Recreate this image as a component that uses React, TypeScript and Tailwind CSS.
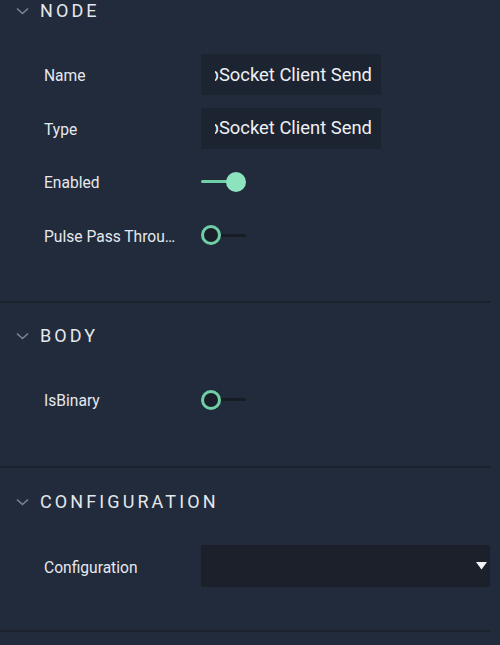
import React from "react";

const font = { fontFamily: "Roboto, 'Liberation Sans', sans-serif" };

function Chevron() {
  return (
    <svg width="13" height="8" viewBox="0 0 13 8" className="shrink-0">
      <path d="M1 1.5 L6.5 6.5 L12 1.5" fill="none" stroke="#7d8592" strokeWidth="1.6" />
    </svg>
  );
}

function Header({ title }: { title: string }) {
  return (
    <div className="flex items-center h-[20px] pl-[16px]">
      <Chevron />
      <span className="ml-[11px] text-[18px] leading-[20px] tracking-[3.1px] text-[#e4e7ec]">{title}</span>
    </div>
  );
}

function Row({ label, children }: { label: string; children: React.ReactNode }) {
  return (
    <div className="flex items-center h-[53.5px] pl-[44px]">
      <div className="w-[136px] truncate text-[15.6px] leading-[20px] pt-[3px] text-[#e6e8ee]">{label}</div>
      <div className="ml-[21px] flex items-center">{children}</div>
    </div>
  );
}

function TextBox({ value }: { value: string }) {
  return (
    <div className="w-[180px] h-[41px] bg-[#1c2331] rounded-[2px] pl-[14px] pr-[9px] flex items-center">
      <div className="overflow-hidden flex justify-end w-full">
        <span className="whitespace-nowrap text-[18.4px] text-[#eef0f4]">{value}</span>
      </div>
    </div>
  );
}

function Toggle({ on }: { on: boolean }) {
  if (on) {
    return (
      <div className="relative w-[45px] h-[20px] flex items-center">
        <div className="w-[30px] h-[3px] bg-[#6fcfa7] rounded-full" />
        <div className="absolute right-0 top-0 w-[20px] h-[20px] rounded-full bg-[#8ee3bf]" />
      </div>
    );
  }
  return (
    <div className="relative w-[45px] h-[20px] flex items-center">
      <div className="ml-[15px] w-[30px] h-[3px] bg-[#171c25] rounded-full" />
      <div className="absolute left-0 top-0 w-[20px] h-[20px] rounded-full bg-[#1a1f29] border-[3px] border-[#6fcfa7]" />
    </div>
  );
}

function Select() {
  return (
    <div className="w-[289px] h-[42px] bg-[#1b202a] rounded-[2px] flex items-center justify-end pr-[3px]">
      <svg width="11" height="8" viewBox="0 0 11 8">
        <path d="M0 0 H11 L5.5 7.5 Z" fill="#f2f2f5" />
      </svg>
    </div>
  );
}

function Section({ title, variant, children }: { title: string; variant: "first" | "mid" | "last"; children: React.ReactNode }) {
  const pad =
    variant === "first"
      ? "pt-[1px] pb-[39px]"
      : variant === "mid"
      ? "pt-[23px] pb-[39px]"
      : "pt-[24px] pb-[37px]";
  const mt = variant === "last" ? "mt-[28px]" : "mt-[27px]";
  return (
    <div className={`w-[490px] border-b-[2px] border-[#1b222d] ${pad}`}>
      <Header title={title} />
      <div className={mt}>{children}</div>
    </div>
  );
}

export default function App() {
  return (
    <div className="w-[500px] h-[645px] bg-[#212b3b] overflow-hidden" style={font}>
      <Section title="NODE" variant="first">
        <Row label="Name">
          <TextBox value="WebSocket Client Send" />
        </Row>
        <Row label="Type">
          <TextBox value="WebSocket Client Send" />
        </Row>
        <Row label="Enabled">
          <Toggle on />
        </Row>
        <Row label="Pulse Pass Through">
          <Toggle on={false} />
        </Row>
      </Section>
      <Section title="BODY" variant="mid">
        <Row label="IsBinary">
          <Toggle on={false} />
        </Row>
      </Section>
      <Section title="CONFIGURATION" variant="last">
        <Row label="Configuration">
          <Select />
        </Row>
      </Section>
    </div>
  );
}
